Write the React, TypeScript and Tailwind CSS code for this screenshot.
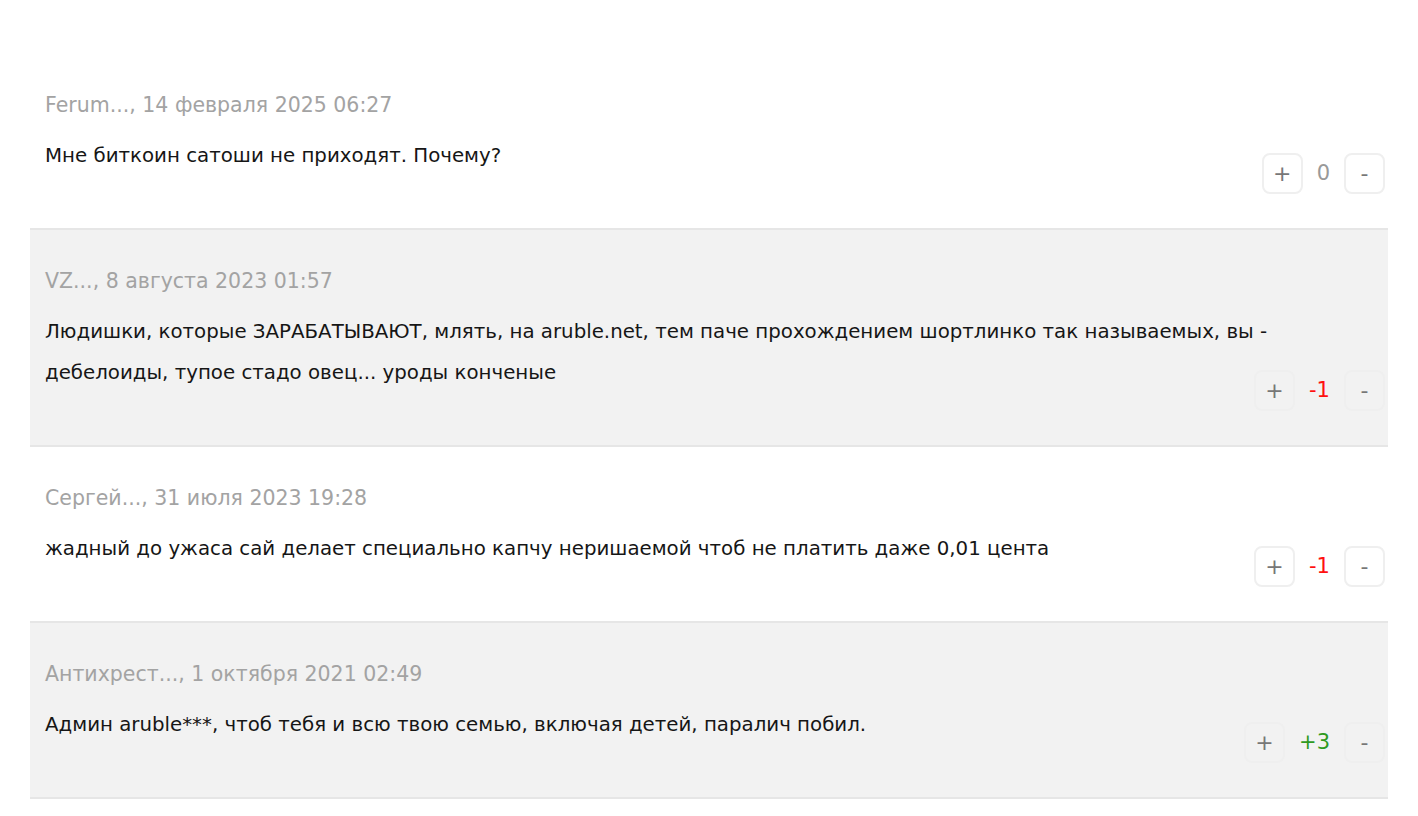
import React from 'react';

interface Comment {
  id: number;
  author: string;
  date: string;
  text: string;
  rating: number;
}

const comments: Comment[] = [
  { id: 1, author: 'Ferum...', date: '14 февраля 2025 06:27', text: 'Мне биткоин сатоши не приходят. Почему?', rating: 0 },
  {
    id: 2,
    author: 'VZ...',
    date: '8 августа 2023 01:57',
    text: 'Людишки, которые ЗАРАБАТЫВАЮТ, млять, на aruble.net, тем паче прохождением шортлинко так называемых, вы - дебелоиды, тупое стадо овец... уроды конченые',
    rating: -1,
  },
  {
    id: 3,
    author: 'Сергей...',
    date: '31 июля 2023 19:28',
    text: 'жадный до ужаса сай делает специально капчу неришаемой чтоб не платить даже 0,01 цента',
    rating: -1,
  },
  {
    id: 4,
    author: 'Антихрест...',
    date: '1 октября 2021 02:49',
    text: 'Админ aruble***, чтоб тебя и всю твою семью, включая детей, паралич побил.',
    rating: 3,
  },
];

function VoteBox({ sign }: { sign: string }) {
  return (
    <button className="w-[41px] h-[41px] flex items-center justify-center rounded-[8px] border-2 border-[#efefef] text-[22px] leading-none text-[#777]">
      {sign}
    </button>
  );
}

export default function App() {
  return (
    <div className="min-h-screen bg-white pt-[54px] px-[30px] font-['Verdana','DejaVu_Sans',sans-serif]">
      <div className="w-[1358px]">
        {comments.map((c, index) => {
          // rating colour
          const ratingColor = c.rating > 0 ? 'text-[#2f9a1f]' : c.rating < 0 ? 'text-[#ff1010]' : 'text-[#999]';
          const ratingText = c.rating > 0 ? `+${c.rating}` : `${c.rating}`;
          return (
            <div
              key={c.id}
              className={`border-b-2 border-[#e6e6e6] pl-[15px] pr-[3px] pt-[36px] pb-[34px] ${index % 2 === 1 ? 'bg-[#f2f2f2]' : 'bg-white'}`}
            >
              <div className="text-[20.5px] leading-[30px] text-[#a3a3a3]">
                {c.author}, {c.date}
              </div>
              <div className="mt-[15px] pr-[60px] text-[19.8px] leading-[41px] text-[#161616]">
                <span>{c.text}</span>
              </div>
              <div className="-mt-[23px] flex items-center justify-end gap-[14px]">
                <VoteBox sign="+" />
                <span className={`text-[21px] ${ratingColor}`}>{ratingText}</span>
                <VoteBox sign="-" />
              </div>
            </div>
          );
        })}
      </div>
    </div>
  );
}
